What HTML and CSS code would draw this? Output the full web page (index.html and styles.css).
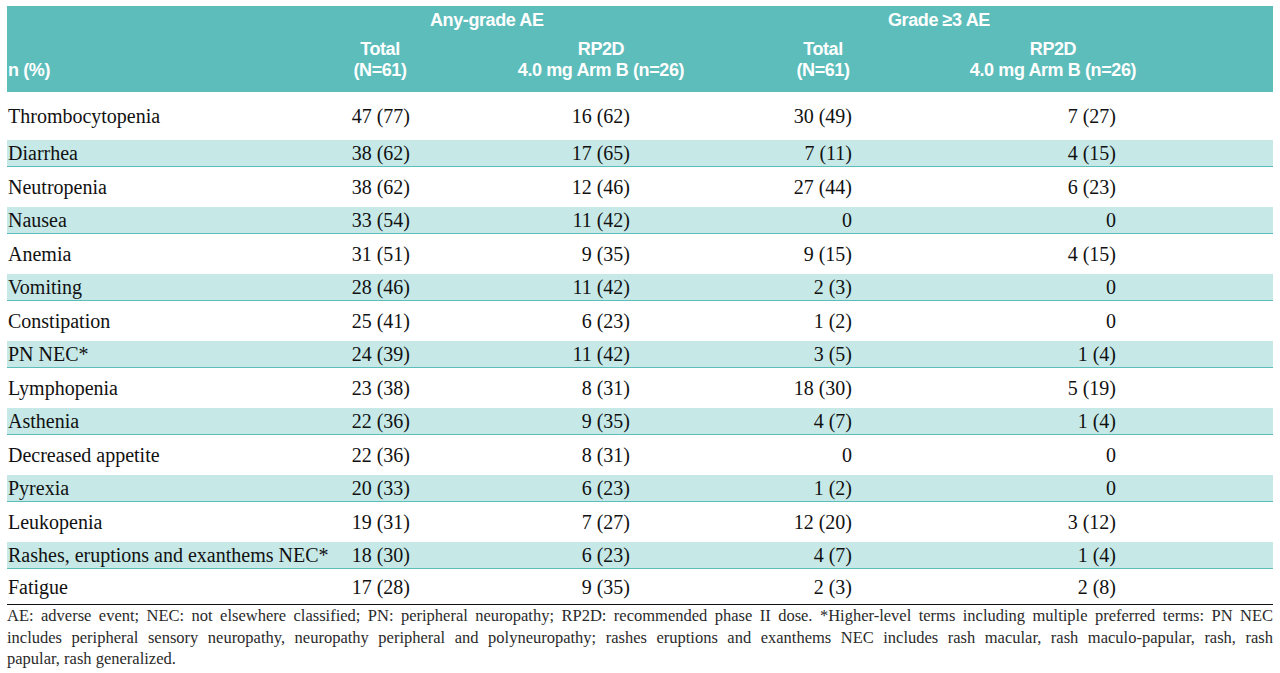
FILE: index.html
```html
<!DOCTYPE html>
<html>
<head>
<meta charset="utf-8">
<link rel="stylesheet" href="styles.css">
</head>
<body>
<div class="page">
<table class="ae">
  <colgroup>
    <col class="c0"><col class="c1"><col class="c2"><col class="c3"><col class="c4">
  </colgroup>
  <thead>
    <tr class="grp">
      <th></th>
      <th colspan="2" class="g1">Any-grade AE</th>
      <th colspan="2" class="g2">Grade &ge;3 AE</th>
    </tr>
    <tr class="sub">
      <th class="lab">n (%)</th>
      <th class="h1">Total<br>(N=61)</th>
      <th class="h2">RP2D<br>4.0 mg Arm B (n=26)</th>
      <th class="h3">Total<br>(N=61)</th>
      <th class="h4">RP2D<br>4.0 mg Arm B (n=26)</th>
    </tr>
  </thead>
  <tbody>
    <tr class="w first"><td>Thrombocytopenia</td><td class="v1">47 (77)</td><td class="v2">16 (62)</td><td class="v3">30 (49)</td><td class="v4">7 (27)</td></tr>
    <tr class="s"><td>Diarrhea</td><td class="v1">38 (62)</td><td class="v2">17 (65)</td><td class="v3">7 (11)</td><td class="v4">4 (15)</td></tr>
    <tr class="w"><td>Neutropenia</td><td class="v1">38 (62)</td><td class="v2">12 (46)</td><td class="v3">27 (44)</td><td class="v4">6 (23)</td></tr>
    <tr class="s"><td>Nausea</td><td class="v1">33 (54)</td><td class="v2">11 (42)</td><td class="v3">0</td><td class="v4">0</td></tr>
    <tr class="w"><td>Anemia</td><td class="v1">31 (51)</td><td class="v2">9 (35)</td><td class="v3">9 (15)</td><td class="v4">4 (15)</td></tr>
    <tr class="s"><td>Vomiting</td><td class="v1">28 (46)</td><td class="v2">11 (42)</td><td class="v3">2 (3)</td><td class="v4">0</td></tr>
    <tr class="w"><td>Constipation</td><td class="v1">25 (41)</td><td class="v2">6 (23)</td><td class="v3">1 (2)</td><td class="v4">0</td></tr>
    <tr class="s"><td>PN NEC*</td><td class="v1">24 (39)</td><td class="v2">11 (42)</td><td class="v3">3 (5)</td><td class="v4">1 (4)</td></tr>
    <tr class="w"><td>Lymphopenia</td><td class="v1">23 (38)</td><td class="v2">8 (31)</td><td class="v3">18 (30)</td><td class="v4">5 (19)</td></tr>
    <tr class="s"><td>Asthenia</td><td class="v1">22 (36)</td><td class="v2">9 (35)</td><td class="v3">4 (7)</td><td class="v4">1 (4)</td></tr>
    <tr class="w"><td>Decreased appetite</td><td class="v1">22 (36)</td><td class="v2">8 (31)</td><td class="v3">0</td><td class="v4">0</td></tr>
    <tr class="s"><td>Pyrexia</td><td class="v1">20 (33)</td><td class="v2">6 (23)</td><td class="v3">1 (2)</td><td class="v4">0</td></tr>
    <tr class="w"><td>Leukopenia</td><td class="v1">19 (31)</td><td class="v2">7 (27)</td><td class="v3">12 (20)</td><td class="v4">3 (12)</td></tr>
    <tr class="s"><td>Rashes, eruptions and exanthems NEC*</td><td class="v1">18 (30)</td><td class="v2">6 (23)</td><td class="v3">4 (7)</td><td class="v4">1 (4)</td></tr>
    <tr class="w last"><td>Fatigue</td><td class="v1">17 (28)</td><td class="v2">9 (35)</td><td class="v3">2 (3)</td><td class="v4">2 (8)</td></tr>
  </tbody>
</table>
<p class="note">
  <span class="line just">AE: adverse event; NEC: not elsewhere classified; PN: peripheral neuropathy; RP2D: recommended phase II dose. *Higher-level terms including multiple preferred terms: PN NEC</span>
  <span class="line just">includes peripheral sensory neuropathy, neuropathy peripheral and polyneuropathy; rashes eruptions and exanthems NEC includes rash macular, rash maculo-papular, rash, rash</span>
  <span class="line">papular, rash generalized.</span>
</p>
</div>
</body>
</html>
```

FILE: styles.css
```css
html, body {
  margin: 0;
  padding: 0;
  background: #ffffff;
}

.page {
  padding: 6px 7px 0 7px;
  width: 1266px;
}

.ae {
  width: 1266px;
  border-collapse: collapse;
  border-spacing: 0;
  table-layout: fixed;
  font-family: "Liberation Serif", "Times New Roman", serif;
  font-size: 20px;
  color: #111111;
}

.c0 { width: 323px; }
.c1 { width: 100px; }
.c2 { width: 342px; }
.c3 { width: 102px; }
.c4 { width: 399px; }

thead th {
  background: #5cbdbb;
  color: #ffffff;
  font-family: "Liberation Sans", Arial, sans-serif;
  font-weight: bold;
  font-size: 18px;
  letter-spacing: -0.4px;
  line-height: 21px;
  padding: 0;
}

.grp th {
  height: 28px;
  padding-top: 3px;
  line-height: 22px;
  vertical-align: top;
  text-align: left;
  box-sizing: border-box;
}

.grp .g1 { padding-left: 100px; }
.grp .g2 { padding-left: 116px; }

.sub th {
  padding-top: 5px;
  padding-bottom: 11px;
  text-align: center;
  vertical-align: top;
}

.sub .lab {
  text-align: left;
  vertical-align: bottom;
  padding-left: 1px;
}

.sub .h4 { padding-right: 41px; }

tbody td {
  padding: 0;
  vertical-align: middle;
  line-height: 22px;
  white-space: nowrap;
}

tbody td:first-child { padding-left: 1px; }

tbody tr.w td { height: 40px; }
tbody tr.first td { height: 48px; }
tbody tr.last td { height: 35px; border-bottom: 1px solid #111111; }

tbody tr.s td {
  height: 26px;
  background: #c6e9e8;
  border-bottom: 1px solid #5cbdbb;
}

.v1, .v2, .v3, .v4 { text-align: right; }
.v1 { padding-right: 20px !important; }
.v2 { padding-right: 142px !important; }
.v3 { padding-right: 22px !important; }
.v4 { padding-right: 157px !important; }

.note {
  margin: 0;
  font-family: "Liberation Serif", "Times New Roman", serif;
  font-size: 16.5px;
  line-height: 21.5px;
  color: #2a2a2a;
  width: 1266px;
}

.note .line { display: block; }
.note .just { text-align: justify; text-align-last: justify; }
```
